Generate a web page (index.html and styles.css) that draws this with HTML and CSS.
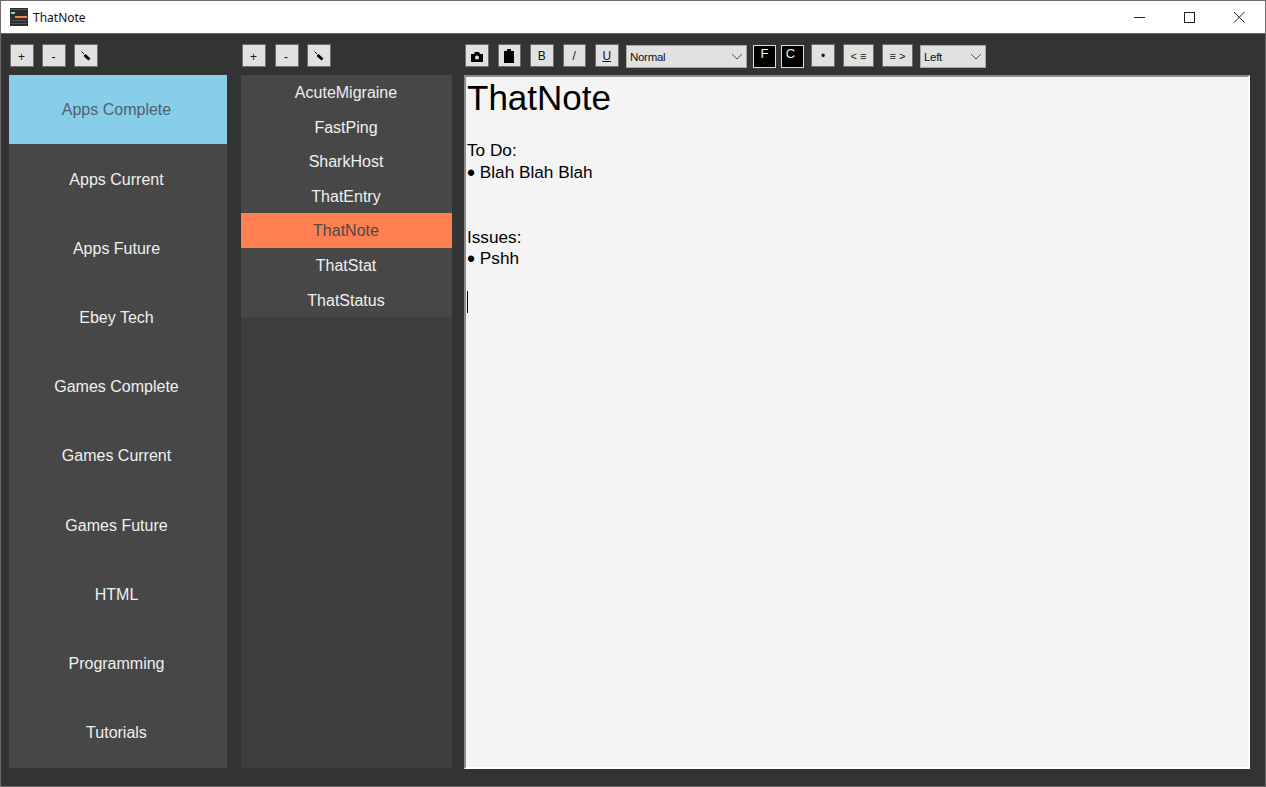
FILE: index.html
```html
<!DOCTYPE html>
<html lang="en">
<head>
    <meta charset="UTF-8">
    <meta name="viewport" content="width=device-width, initial-scale=1.0">
    <title>ThatNote</title>
    <link rel="stylesheet" href="styles.css">
</head>
<body>
<div class="window">
    <div class="titlebar">
        <svg class="app-icon" width="18" height="18" viewBox="0 0 18 18">
            <rect width="18" height="18" fill="#2e2e2e"/>
            <rect y="1" width="18" height="1" fill="#555"/>
            <rect x="1" y="4" width="4" height="2" fill="#87ceeb"/>
            <rect x="5" y="8" width="12" height="2" fill="#ff7f50"/>
            <rect x="1" y="12" width="16" height="1" fill="#555"/>
            <rect x="1" y="15" width="16" height="1" fill="#555"/>
        </svg>
        <span class="app-name">ThatNote</span>
        <div class="win-controls">
            <svg width="12" height="12" viewBox="0 0 12 12"><path d="M1 6.500h11" stroke="#222" fill="none"/></svg>
            <svg width="12" height="12" viewBox="0 0 12 12"><rect x="1.500" y="1.500" width="10" height="10" stroke="#222" fill="none"/></svg>
            <svg width="12" height="12" viewBox="0 0 12 12"><path d="M1 1l10.500 10.500M11.500 1L1 11.500" stroke="#222" fill="none"/></svg>
        </div>
    </div>

    <div class="content">
        <div class="col col-categories">
            <div class="toolbar toolbar-categories">
                <button class="btn btn-sign">+</button>
                <button class="btn btn-sign">-</button>
                <button class="btn">
                    <svg width="12" height="12" viewBox="0 0 12 12"><path d="M1.500 1.500L4 4" stroke="#000" fill="none"/><path d="M4.500 5L9.500 9.500" stroke="#000" stroke-width="3" fill="none"/></svg>
                </button>
            </div>
            <div class="list list-categories">
                <div class="item selected-blue">Apps Complete</div>
                <div class="item">Apps Current</div>
                <div class="item">Apps Future</div>
                <div class="item">Ebey Tech</div>
                <div class="item">Games Complete</div>
                <div class="item">Games Current</div>
                <div class="item">Games Future</div>
                <div class="item">HTML</div>
                <div class="item">Programming</div>
                <div class="item">Tutorials</div>
            </div>
        </div>

        <div class="col col-notes">
            <div class="toolbar">
                <button class="btn btn-sign">+</button>
                <button class="btn btn-sign">-</button>
                <button class="btn">
                    <svg width="12" height="12" viewBox="0 0 12 12"><path d="M1.500 1.500L4 4" stroke="#000" fill="none"/><path d="M4.500 5L9.500 9.500" stroke="#000" stroke-width="3" fill="none"/></svg>
                </button>
            </div>
            <div class="list list-notes">
                <div class="item">AcuteMigraine</div>
                <div class="item">FastPing</div>
                <div class="item">SharkHost</div>
                <div class="item">ThatEntry</div>
                <div class="item selected-orange">ThatNote</div>
                <div class="item">ThatStat</div>
                <div class="item">ThatStatus</div>
            </div>
        </div>

        <div class="col col-editor">
            <div class="toolbar toolbar-editor">
                <button class="btn btn-camera">
                    <svg width="12" height="10" viewBox="0 0 12 10"><path d="M0 2h3l1-2h4l1 2h3v8H0z" fill="#000"/><circle cx="6" cy="5.500" r="2" fill="#e1e1e1"/></svg>
                </button>
                <button class="btn">
                    <svg width="10" height="14" viewBox="0 0 10 14"><path d="M0 2h3V0h4v2h3v12H0z" fill="#000"/></svg>
                </button>
                <button class="btn">B</button>
                <button class="btn">/</button>
                <button class="btn underline">U</button>
                <div class="combo combo-size">
                    <span>Normal</span>
                    <svg width="12" height="7" viewBox="0 0 12 7"><path d="M1 1l5 5 5-5" stroke="#555" fill="none"/></svg>
                </div>
                <button class="btn swatch swatch-f">F</button>
                <button class="btn swatch swatch-c">C</button>
                <button class="btn btn-bullet">•</button>
                <button class="btn btn-wide">&lt; ≡</button>
                <button class="btn btn-wide">≡ &gt;</button>
                <div class="combo combo-align">
                    <span>Left</span>
                    <svg width="12" height="7" viewBox="0 0 12 7"><path d="M1 1l5 5 5-5" stroke="#555" fill="none"/></svg>
                </div>
            </div>
            <div class="editor">
                <div class="note-title">ThatNote</div>
                <div class="line">&nbsp;</div>
                <div class="line">To Do:</div>
                <div class="line"><span class="bullet">•</span> Blah Blah Blah</div>
                <div class="line">&nbsp;</div>
                <div class="line">&nbsp;</div>
                <div class="line">Issues:</div>
                <div class="line"><span class="bullet">•</span> Pshh</div>
                <div class="line">&nbsp;</div>
                <div class="line"><span class="caret"></span></div>
            </div>
        </div>
    </div>
</div>
</body>
</html>
```

FILE: styles.css
```css
* { box-sizing: border-box; }
html, body { margin: 0; height: 100%; }
body { font-family: "Liberation Sans", Arial, sans-serif; overflow: hidden; }

.window {
    width: 1266px;
    height: 787px;
    border: 1px solid #6b6b6b;
    display: flex;
    flex-direction: column;
    background: #333;
}

/* title bar */
.titlebar {
    height: 32px;
    flex: none;
    background: #fff;
    display: flex;
    align-items: center;
    padding-left: 9px;
}
.app-name {
    margin-left: 5px;
    font-family: "Noto Sans", sans-serif;
    font-size: 12px;
    color: #111;
}
.win-controls {
    margin-left: auto;
    display: flex;
    gap: 38px;
    padding-right: 20px;
}
.win-controls svg { display: block; }

/* columns */
.content {
    flex: 1;
    display: flex;
    padding: 10px 15px 17px 8px;
    border-top: 1px solid #6b6b6b;
}
.col { display: flex; flex-direction: column; }
.col-categories { width: 218px; margin-right: 14px; }
.col-notes { width: 211px; margin-right: 12px; }
.col-editor { flex: 1; }

/* toolbars */
.toolbar {
    height: 23px;
    flex: none;
    display: flex;
    align-items: flex-start;
    gap: 8.500px;
    margin-bottom: 8px;
    padding-left: 1px;
}
.toolbar-categories { gap: 8px; }
.toolbar-editor { gap: 9px; }
.toolbar-editor .btn { width: 23.500px; }
.btn {
    width: 24px;
    height: 23px;
    padding: 0;
    border: 1px solid #6e6e6e;
    background: #e1e1e1;
    color: #111;
    font-family: "Liberation Sans", Arial, sans-serif;
    font-size: 12px;
    display: flex;
    align-items: center;
    justify-content: center;
}
.btn-sign { padding: 2px 1px 0 0; }
.btn-camera { padding-top: 2px; }
.underline { text-decoration: underline; }
.toolbar-editor .swatch {
    width: 23px;
    margin-top: 1px;
    background: #000;
    color: #f4f4f4;
    border-color: #ddd;
    align-items: flex-start;
    font-size: 13px;
}
.toolbar-editor .btn-wide { width: 31px; font-size: 11px; margin-left: -1px; }
.toolbar-editor .btn-bullet { width: 24px; margin-left: -2px; }
.swatch-f { margin-left: -3px; }
.swatch-c { margin-left: -4px; padding-right: 4px; }

.combo {
    height: 23px;
    margin-top: 1px;
    background: #e1e1e1;
    border: 1px solid #a8a8a8;
    display: flex;
    align-items: center;
    justify-content: space-between;
    padding: 0 3px;
    font-size: 11.500px;
    letter-spacing: -0.300px;
    color: #111;
}
.combo-size { width: 121px; margin-left: -1.500px; }
.combo-align { width: 66px; margin-left: -2px; }

/* lists */
.list { flex: 1; margin-bottom: 1px; }
.list-categories { background: #474747; }
.list-categories .item { height: 69.200px; padding: 1.600px 3px 0 0; }
.list-notes { background: #3d3d3d; }
.list-notes .item { height: 34.600px; background: #474747; padding: 1.600px 1px 0 0; }
.item {
    display: flex;
    align-items: center;
    justify-content: center;
    color: #f0f0f0;
    font-size: 16px;
}
.item.selected-blue { background: #87ceeb; color: #4f5f6b; }
.item.selected-orange { background: #ff7f50; color: #4a4a4a; }

/* editor */
.editor {
    flex: 1;
    background: #f4f4f4;
    border: 2px solid #fff;
    border-top-color: #8a8a8a;
    border-left-color: #8a8a8a;
    padding: 0 1px;
    color: #000;
    font-size: 17.200px;
    line-height: 21.650px;
}
.note-title {
    font-size: 35px;
    line-height: 41.500px;
}
.line { height: 21.650px; }
.bullet {
    font-size: 23px;
    line-height: 1px;
    vertical-align: -3px;
}
.caret {
    display: inline-block;
    width: 1px;
    height: 22px;
    margin-top: -1px;
    background: #000;
    vertical-align: top;
}
```
